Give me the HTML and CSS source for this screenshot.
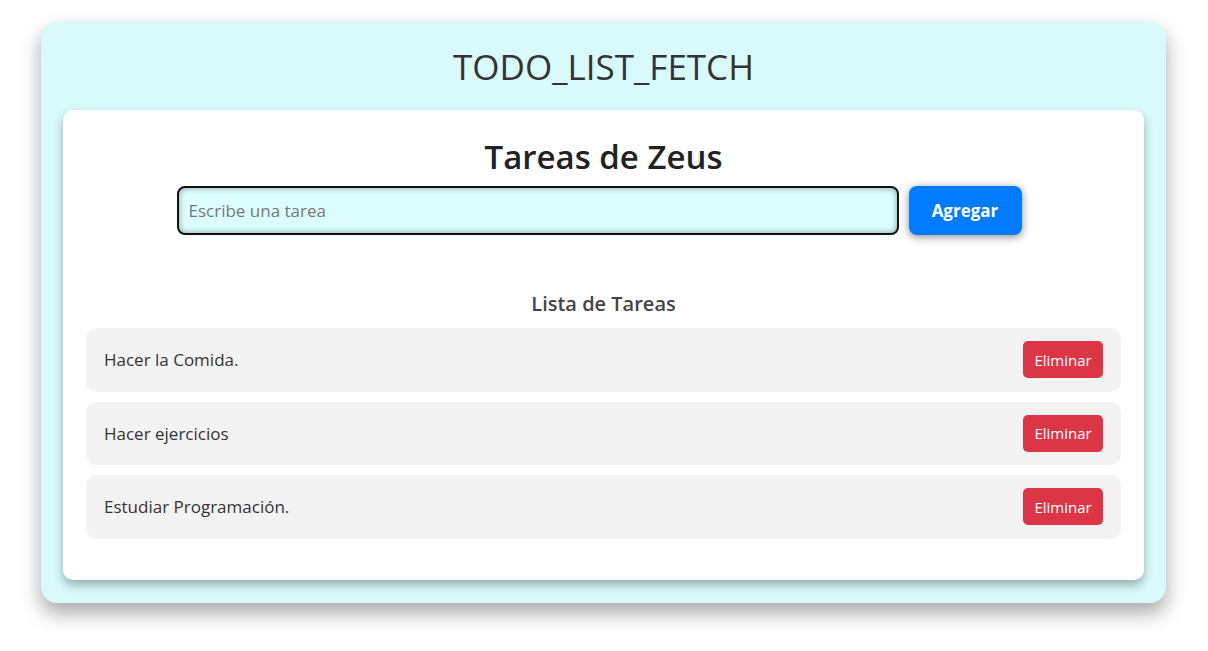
FILE: index.html
```html
<!DOCTYPE html>
<html lang="es">
<head>
<meta charset="utf-8">
<title>TODO_LIST_FETCH</title>
<link rel="stylesheet" href="styles.css">
</head>
<body>
<div class="app">
  <h2 class="app-title">TODO_LIST_FETCH</h2>
  <div class="card">
    <h1 class="card-title">Tareas de Zeus</h1>
    <form class="add-form">
      <input class="task-input" type="text" placeholder="Escribe una tarea">
      <button class="add-btn" type="button">Agregar</button>
    </form>
    <h3 class="list-title">Lista de Tareas</h3>
    <ul class="task-list">
      <li class="task"><span>Hacer la Comida.</span><button class="del-btn" type="button">Eliminar</button></li>
      <li class="task"><span>Hacer ejercicios</span><button class="del-btn" type="button">Eliminar</button></li>
      <li class="task"><span>Estudiar Programación.</span><button class="del-btn" type="button">Eliminar</button></li>
    </ul>
  </div>
</div>
</body>
</html>
```
FILE: styles.css
```css
* { box-sizing: border-box; }
html, body { margin: 0; padding: 0; background: #fff; }
body {
  font-family: "Open Sans", "Noto Sans", sans-serif;
  padding: 22px 1px 48px 0;
  min-height: 100vh;
}
.app {
  width: 1125px;
  margin: 0 auto;
  background: #d8fafb;
  border-radius: 16px;
  padding: 0 22px 23px;
  box-shadow: 0 10px 20px rgba(0,0,0,0.35);
}
.app-title {
  margin: 0;
  height: 88px;
  line-height: 90px;
  text-align: center;
  font-size: 35px;
  font-weight: 400;
  color: #333;
}
.card {
  background: #fff;
  border-radius: 10px;
  padding: 22px 23px 41px;
  box-shadow: 0 5px 10px rgba(0,0,0,0.3);
}
.card-title {
  margin: 0;
  text-align: center;
  font-size: 33px;
  font-weight: 600;
  color: #222;
  line-height: 50px;
}
.add-form {
  display: flex;
  justify-content: center;
  gap: 10px;
  margin-top: 4px;
  padding-right: 9px;
}
.task-input {
  width: 722px;
  height: 49px;
  border: 2px solid #111;
  border-radius: 8px;
  background: #dcfffe;
  box-shadow: inset 0 0 6px rgba(0,0,0,0.4);
  padding: 0 10px;
  font-family: inherit;
  font-size: 17px;
  color: #333;
}
.task-input::placeholder { color: #777; }
.add-btn {
  width: 113px;
  height: 49px;
  border: none;
  border-radius: 8px;
  background: #007bff;
  color: #fff;
  font-family: inherit;
  font-size: 17px;
  font-weight: 700;
  box-shadow: 0 2px 8px rgba(0,0,0,0.45);
}
.list-title {
  margin: 55px 0 0;
  text-align: center;
  font-size: 20px;
  font-weight: 600;
  color: #444;
  line-height: 28px;
}
.task-list {
  list-style: none;
  margin: 10px 0 0;
  padding: 0;
  display: flex;
  flex-direction: column;
  gap: 10px;
}
.task {
  display: flex;
  align-items: center;
  justify-content: space-between;
  height: 63.5px;
  padding: 0 18px;
  background: #f3f3f3;
  border-radius: 10px;
  font-size: 17px;
  color: #333;
}
.del-btn {
  width: 80px;
  height: 37px;
  border: none;
  border-radius: 5px;
  background: #dc3545;
  color: #fff;
  font-family: inherit;
  font-size: 15px;
}
```
